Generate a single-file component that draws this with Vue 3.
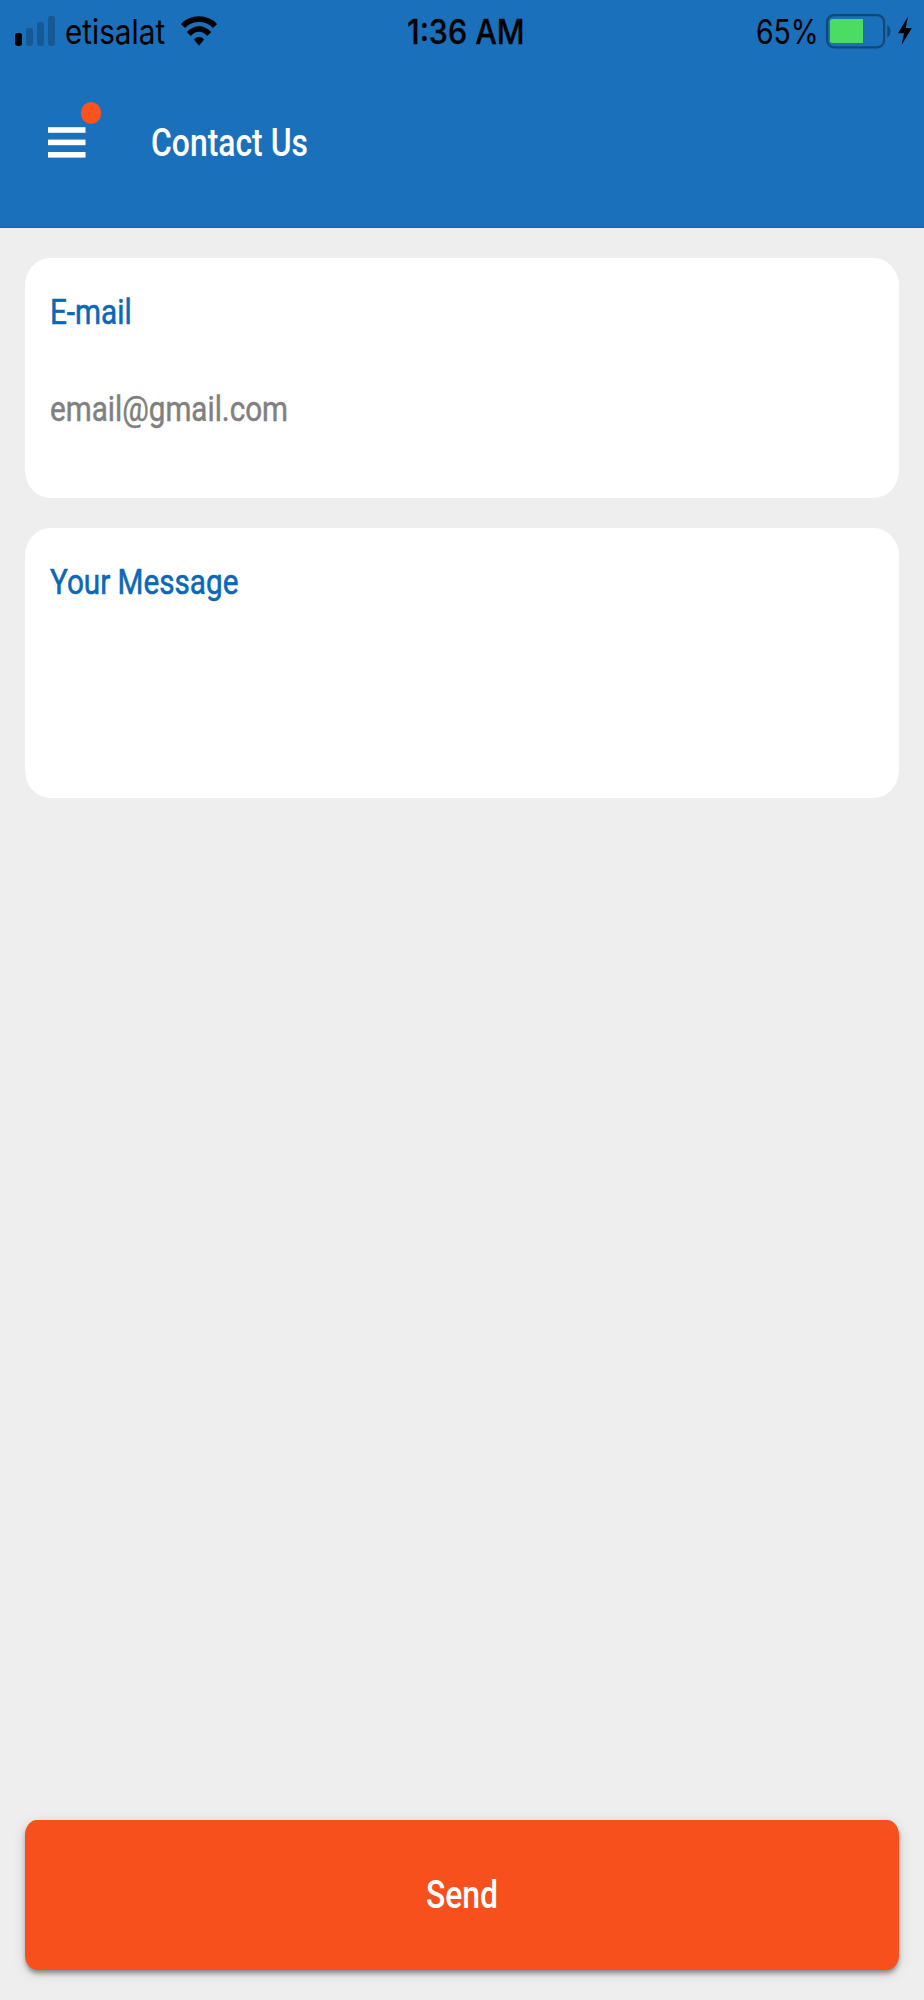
<script setup>
import { ref } from 'vue'

const carrier = ref('etisalat')
const time = ref('1:36 AM')
const battery = ref(65)

const bars = [
  { x: 0, y: 17, height: 13, active: true },
  { x: 11, y: 12, height: 18, active: false },
  { x: 22, y: 6, height: 24, active: false },
  { x: 33, y: 0, height: 30, active: false },
]
</script>

<template>
  <div class="screen">
    <header class="header">
      <div class="status-bar">
        <div class="status-left">
          <svg class="signal" width="40" height="30" viewBox="0 0 40 30">
            <rect
              v-for="bar in bars"
              :key="bar.x"
              :x="bar.x"
              :y="bar.y"
              width="7"
              :height="bar.height"
              rx="2.4"
              :fill="bar.active ? '#000' : '#155a96'"
            />
          </svg>
          <span class="status-text carrier">{{ carrier }}</span>
          <svg class="wifi" width="36" height="32" viewBox="0 0 36 32" fill="none" stroke="#000">
            <path d="M2 11C10.5 1.8 25.5 1.8 34 11" stroke-width="5.8" />
            <path d="M7.8 19C14 12.4 22 12.4 28.2 19" stroke-width="5.6" />
            <path
              d="M13.3 24.5C16 21.6 20 21.6 22.7 24.5L18 30.2Z"
              fill="#000"
              stroke-width="0.8"
              stroke-linejoin="round"
            />
          </svg>
        </div>
        <span class="status-text time">{{ time }}</span>
        <div class="status-right">
          <span class="status-text percent">{{ battery }}%</span>
          <svg class="battery" width="66" height="36" viewBox="0 0 66 36">
            <rect x="1.1" y="1.1" width="57" height="32.2" rx="7" fill="none" stroke="#114876" stroke-width="2.2" />
            <rect x="4" y="5" width="33" height="24" rx="2.5" fill="#4cdc64" />
            <rect x="32" y="5" width="5" height="24" fill="#4cdc64" />
            <path d="M61.3 11.3C65.5 13 65.5 21.7 61.3 23.4Z" fill="#114876" />
          </svg>
          <svg class="bolt" width="14" height="30" viewBox="0 0 14 30">
            <path d="M10 0.5L0 17.2H6L3.6 29L13.8 12H7.7Z" fill="#000" />
          </svg>
        </div>
      </div>

      <div class="nav-bar">
        <div class="menu">
          <svg width="38" height="32" viewBox="0 0 38 32" fill="#fff">
            <rect y="0.2" width="37.5" height="5.6" />
            <rect y="12.6" width="37.5" height="5.6" />
            <rect y="25" width="37.5" height="5.6" />
          </svg>
          <span class="menu-badge"></span>
        </div>
        <h1 class="title condensed">Contact Us</h1>
      </div>
    </header>

    <main class="content">
      <section class="card email-card">
        <div class="label condensed">E-mail</div>
        <div class="value condensed">email@gmail.com</div>
      </section>
      <section class="card message-card">
        <div class="label condensed">Your Message</div>
      </section>
    </main>

    <button class="send-button" type="button">
      <span class="condensed">Send</span>
    </button>
  </div>
</template>

<style>
body {
  margin: 0;
  background-color: #eee;
}
</style>

<style scoped>
.screen {
  box-sizing: border-box;
  display: flex;
  flex-direction: column;
  width: 924px;
  height: 2000px;
  padding-bottom: 30.5px;
  background-color: #eee;
  font-family: Roboto, sans-serif;
  overflow: hidden;
}

.header {
  box-sizing: border-box;
  height: 227.5px;
  flex-shrink: 0;
  background-color: #1a70bb;
  border-bottom: 1px solid #0d64b6;
}

.status-bar {
  display: grid;
  grid-template-columns: 407px 1fr 168px;
  height: 62px;
  align-items: center;
  color: #000;
}

.status-left,
.status-right {
  display: flex;
  align-items: center;
}

.status-text {
  font-family: Inter, sans-serif;
  font-size: 34px;
  line-height: 63px;
  white-space: nowrap;
  transform-origin: left center;
}

.signal {
  margin-top: -2px;
  margin-left: 15px;
}

.carrier {
  width: 99px;
  margin-left: 9.5px;
  transform: scaleX(0.873);
}

.wifi {
  margin-left: 17px;
  margin-top: -2px;
}

.time {
  font-weight: 500;
  transform: scaleX(0.895);
  -webkit-text-stroke: 0.3px #000;
}

.percent {
  width: 70px;
  transform: scaleX(0.835);
}

.battery {
  flex-shrink: 0;
}

.bolt {
  flex-shrink: 0;
  margin-top: -2px;
  margin-left: 6px;
}

.nav-bar {
  display: flex;
  align-items: center;
  height: 162px;
  padding-left: 48px;
}

.menu {
  position: relative;
  width: 38px;
  height: 32px;
}

.menu svg {
  display: block;
}

.menu-badge {
  position: absolute;
  top: -25px;
  left: 33px;
  width: 19.5px;
  height: 22px;
  border-radius: 10px;
  background-color: #fb531f;
}

.condensed {
  transform: scaleX(0.839);
  transform-origin: left center;
  white-space: nowrap;
}

.title {
  margin: 0 0 0 64.8px;
  color: #fff;
  font-size: 38px;
  font-weight: 500;
  line-height: 44px;
}

.content {
  display: flex;
  flex: 1;
  flex-direction: column;
  gap: 30.5px;
  padding: 30.5px 25px 0;
}

.card {
  box-sizing: border-box;
  padding: 31.5px 24.8px 0;
  border-radius: 25px / 28px;
  background-color: #fff;
}

.email-card {
  height: 239.5px;
}

.message-card {
  height: 269.5px;
}

.label {
  color: #0b67b8;
  font-size: 35.5px;
  font-weight: 400;
  line-height: 45px;
  transform: scaleX(0.836);
  -webkit-text-stroke: 0.6px #0b67b8;
}

.value {
  margin-top: 52.5px;
  color: #808080;
  font-size: 35.5px;
  font-weight: 400;
  line-height: 44px;
  transform: scaleX(0.834);
  -webkit-text-stroke: 0.5px #808080;
}

.send-button {
  display: flex;
  flex-shrink: 0;
  align-items: center;
  justify-content: center;
  height: 149.5px;
  margin: 0 25px;
  padding: 0;
  border: 0;
  border-radius: 12px / 15px;
  background-color: #f8501c;
  box-shadow:
    0 4px 5px -1px rgba(0, 0, 0, 0.4),
    0 3px 14px rgba(0, 0, 0, 0.13);
  color: #fff;
  font-family: inherit;
  font-size: 38px;
  font-weight: 500;
}

.send-button .condensed {
  transform-origin: center;
}
</style>
